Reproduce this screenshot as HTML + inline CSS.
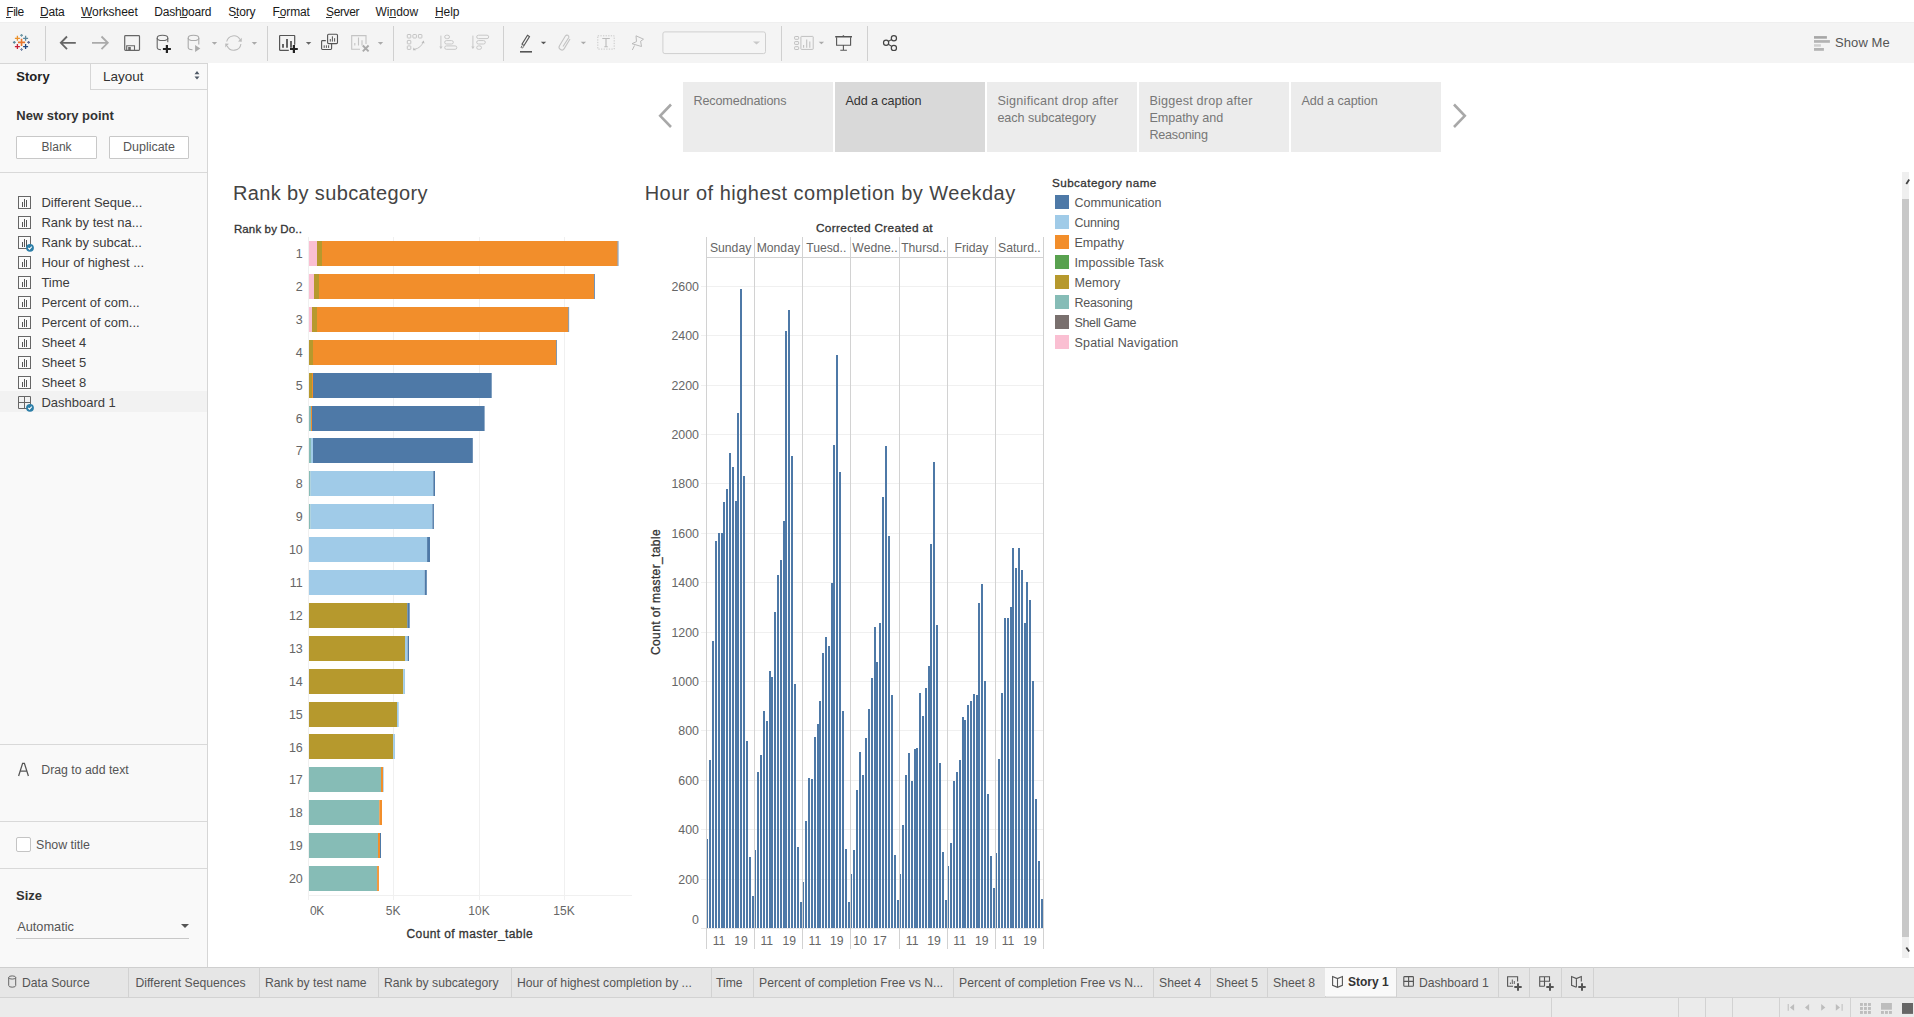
<!DOCTYPE html>
<html><head><meta charset="utf-8"><style>
html,body{margin:0;padding:0;}
body{width:1914px;height:1017px;overflow:hidden;position:relative;background:#fff;font-family:"Liberation Sans",sans-serif;}
.t{position:absolute;white-space:pre;line-height:1;font-family:"Liberation Sans",sans-serif;}
.r{position:absolute;}
svg{position:absolute;overflow:visible;}
</style></head><body>
<div class=t style="left:6.30px;top:5.64px;font-size:12px;color:#1a1a1a;letter-spacing:-0.461px;">File</div>
<div class=t style="left:40.10px;top:5.64px;font-size:12px;color:#1a1a1a;letter-spacing:-0.240px;">Data</div>
<div class=t style="left:81.00px;top:5.64px;font-size:12px;color:#1a1a1a;letter-spacing:-0.049px;">Worksheet</div>
<div class=t style="left:154.20px;top:5.64px;font-size:12px;color:#1a1a1a;letter-spacing:-0.169px;">Dashboard</div>
<div class=t style="left:228.20px;top:5.64px;font-size:12px;color:#1a1a1a;letter-spacing:-0.183px;">Story</div>
<div class=t style="left:272.60px;top:5.64px;font-size:12px;color:#1a1a1a;letter-spacing:-0.153px;">Format</div>
<div class=t style="left:326.00px;top:5.64px;font-size:12px;color:#1a1a1a;letter-spacing:-0.374px;">Server</div>
<div class=t style="left:375.40px;top:5.64px;font-size:12px;color:#1a1a1a;letter-spacing:0.035px;">Window</div>
<div class=t style="left:435.00px;top:5.64px;font-size:12px;color:#1a1a1a;letter-spacing:-0.072px;">Help</div>
<div class=r style="left:6px;top:17px;width:4.7px;height:1px;background:#333;"></div>
<div class=r style="left:40.1px;top:17px;width:7.8px;height:1px;background:#333;"></div>
<div class=r style="left:80.9px;top:17px;width:11px;height:1px;background:#333;"></div>
<div class=r style="left:180.2px;top:17px;width:6.6px;height:1px;background:#333;"></div>
<div class=r style="left:233.7px;top:17px;width:4.6px;height:1px;background:#333;"></div>
<div class=r style="left:278.4px;top:17px;width:6.5px;height:1px;background:#333;"></div>
<div class=r style="left:326.2px;top:17px;width:5.7px;height:1px;background:#333;"></div>
<div class=r style="left:388.9px;top:17px;width:6.8px;height:1px;background:#333;"></div>
<div class=r style="left:435.1px;top:17px;width:7.6px;height:1px;background:#333;"></div>
<div class=r style="left:0px;top:22px;width:1914px;height:41px;background:#f4f4f4;"></div>
<div class=r style="left:0px;top:22px;width:1914px;height:1px;background:#efefef;"></div>
<div class=r style="left:45px;top:26px;width:1px;height:35px;background:#d0d0d0;"></div>
<div class=r style="left:267px;top:26px;width:1px;height:35px;background:#d0d0d0;"></div>
<div class=r style="left:393px;top:26px;width:1px;height:35px;background:#d0d0d0;"></div>
<div class=r style="left:503px;top:26px;width:1px;height:35px;background:#d0d0d0;"></div>
<div class=r style="left:781px;top:26px;width:1px;height:35px;background:#d0d0d0;"></div>
<div class=r style="left:867px;top:26px;width:1px;height:35px;background:#d0d0d0;"></div>
<svg style="left:0;top:0" width="1914" height="70"><path d="M17.95 42.4 H25.150000000000002 M21.55 38.8 V46.0" stroke="#e8762d" stroke-width="1.6"/><path d="M14.899999999999999 38.3 H19.9 M17.4 35.8 V40.8" stroke="#eb912b" stroke-width="1.3"/><path d="M23.1 38.3 H28.1 M25.6 35.8 V40.8" stroke="#5b879b" stroke-width="1.3"/><path d="M14.899999999999999 46.6 H19.9 M17.4 44.1 V49.1" stroke="#c72037" stroke-width="1.3"/><path d="M23.1 46.6 H28.1 M25.6 44.1 V49.1" stroke="#1f457e" stroke-width="1.3"/><path d="M20.150000000000002 35.4 H22.95 M21.55 34.0 V36.8" stroke="#7199a6" stroke-width="1.1"/><path d="M12.9 42.4 H15.700000000000001 M14.3 41.0 V43.8" stroke="#59879b" stroke-width="1.1"/><path d="M27.200000000000003 42.4 H30.0 M28.6 41.0 V43.8" stroke="#5c6692" stroke-width="1.1"/><path d="M20.150000000000002 49.5 H22.95 M21.55 48.1 V50.9" stroke="#7c8aa9" stroke-width="1.1"/><path d="M75.8 42.8 H61 M67 36.5 L60.8 42.8 L67 49.2" fill="none" stroke="#666" stroke-width="1.8"/><path d="M92 42.8 H107.8 M101.5 36.5 L107.8 42.8 L101.5 49.2" fill="none" stroke="#aaa" stroke-width="1.8"/><rect x="124.7" y="35.7" width="14.8" height="14.6" rx="0.8" fill="none" stroke="#666" stroke-width="1.2"/><path d="M126.7 50.3 V45.7 H134.5 V50.3" fill="none" stroke="#666" stroke-width="1.1"/><rect x="128.2" y="47" width="2.6" height="3.3" fill="#666"/><ellipse cx="162.5" cy="37.9" rx="5.3" ry="2.6" fill="none" stroke="#666" stroke-width="1.1"/><path d="M157.2 37.9 V47.5 Q157.2 49.5 161 49.8 M167.8 37.9 V42.3" fill="none" stroke="#666" stroke-width="1.1"/><path d="M162.9 49 H170.9 M166.9 45 V53" stroke="#222" stroke-width="2.2"/><ellipse cx="193.5" cy="37.9" rx="5.3" ry="2.6" fill="none" stroke="#aaa" stroke-width="1.1"/><path d="M188.2 37.9 V47.5 Q188.2 49.5 192.5 49.8 M198.8 37.9 V44.5" fill="none" stroke="#aaa" stroke-width="1.1"/><path d="M195.1 45 L200.3 48.4 L195.1 51.9 Z" fill="#aaa"/><path d="M211.8 42.1 H217.2 L214.5 44.699999999999996 Z" fill="#aaa"/><path d="M226.7 41.5 A7.2 7.2 0 0 1 240 39.5 M240.9 44 A7.2 7.2 0 0 1 227.2 46" fill="none" stroke="#bbb" stroke-width="1.1"/><path d="M238 41.5 L241.8 41.8 L241.7 37.8 Z M228.9 43.8 L225.2 43.6 L225.4 47.6 Z" fill="#bbb"/><path d="M251.70000000000002 42.1 H257.1 L254.4 44.699999999999996 Z" fill="#aaa"/><path d="M288.8 50.3 H280 Q279.6 50.3 279.6 49.8 V36 Q279.6 35.5 280.1 35.5 H294.3 Q294.7 35.5 294.7 36 V44.8" fill="none" stroke="#555" stroke-width="1.2"/><path d="M283 47.7 V44 M287 47.7 V39.1 M291 47.7 V41" stroke="#555" stroke-width="1.8"/><path d="M290.0 49 H297.79999999999995 M293.9 45.1 V52.9" stroke="#222" stroke-width="2.2"/><path d="M305.90000000000003 42.1 H311.3 L308.6 44.699999999999996 Z" fill="#666"/><rect x="327.6" y="34.3" width="9.9" height="9.3" rx="1" fill="#f3f3f3" stroke="#555" stroke-width="1.1"/><path d="M325.8 40.6 H322.5 Q321.6 40.6 321.6 41.5 V48.6 Q321.6 49.5 322.5 49.5 H330.7 Q331.6 49.5 331.6 48.6 V43.6" fill="none" stroke="#555" stroke-width="1.1"/><path d="M330.3 41.6 V39 M332.4 41.6 V36.3 M334.6 41.6 V38.2" stroke="#555" stroke-width="1"/><path d="M324.2 47.9 V45.3 M326.4 47.9 V45.3 M328.6 47.9 V45.3" stroke="#555" stroke-width="1"/><path d="M360 49.3 H351.7 V35.6 H366 V44" fill="none" stroke="#c4c4c4" stroke-width="1.1"/><path d="M354.8 45.5 V43 M358.5 45.5 V37.5 M362 45.5 V40.3" stroke="#c4c4c4" stroke-width="1.1"/><path d="M362.8 45.5 L368.6 51.3 M368.6 45.5 L362.8 51.3" stroke="#aaa" stroke-width="1.9"/><path d="M377.8 42.1 H383.2 L380.5 44.699999999999996 Z" fill="#aaa"/><rect x="407.3" y="34.5" width="3.5" height="3.5" rx="0.6" fill="none" stroke="#c4c4c4" stroke-width="1"/><rect x="412.9" y="34.5" width="3.5" height="3.5" rx="0.6" fill="none" stroke="#c4c4c4" stroke-width="1"/><rect x="418.4" y="34.5" width="3.5" height="3.5" rx="0.6" fill="none" stroke="#c4c4c4" stroke-width="1"/><rect x="407.3" y="40.4" width="3.5" height="3.5" rx="0.6" fill="none" stroke="#c4c4c4" stroke-width="1"/><rect x="407.3" y="45.9" width="3.5" height="3.5" rx="0.6" fill="none" stroke="#c4c4c4" stroke-width="1"/><path d="M414.5 49.3 Q421 48 423.1 42" fill="none" stroke="#c4c4c4" stroke-width="1"/><path d="M421.5 42.5 L423.8 40.6 L424.5 43.6 Z M413.5 47.6 L413 50.3 L416 50.3 Z" fill="#bbb"/><path d="M440.9 35.6 V48.2" stroke="#c8c8c8" stroke-width="1"/><path d="M439.2 46.5 L440.9 49 L442.6 46.5 Z" fill="#c8c8c8"/><rect x="444.7" y="35.2" width="4.8" height="3.4" rx="1.7" fill="none" stroke="#c8c8c8" stroke-width="1"/><rect x="444.7" y="40.6" width="8.6" height="3.4" rx="1.7" fill="none" stroke="#c8c8c8" stroke-width="1"/><rect x="444.7" y="45.9" width="12.1" height="3.4" rx="1.7" fill="none" stroke="#c8c8c8" stroke-width="1"/><path d="M472.9 35.6 V48.2" stroke="#c8c8c8" stroke-width="1"/><path d="M471.2 46.5 L472.9 49 L474.6 46.5 Z" fill="#c8c8c8"/><rect x="476.7" y="35.2" width="12" height="3.4" rx="1.7" fill="none" stroke="#c8c8c8" stroke-width="1"/><rect x="476.7" y="40.6" width="8.6" height="3.4" rx="1.7" fill="none" stroke="#c8c8c8" stroke-width="1"/><rect x="476.7" y="45.9" width="4.8" height="3.4" rx="1.7" fill="none" stroke="#c8c8c8" stroke-width="1"/><path d="M527.5 35.3 L529.5 36.6 L524 45.5 L522 44.2 Z" fill="none" stroke="#555" stroke-width="1.1"/><path d="M522 45.6 L521 48 M523.7 46.3 L522.3 48.4" stroke="#555" stroke-width="0.9"/><rect x="520" y="51" width="12" height="1.6" fill="#555"/><path d="M540.8 41.7 H546.2 L543.5 44.3 Z" fill="#555"/><path d="M563 46.5 L568.8 37.5 A1.9 1.9 0 0 0 565.5 35.8 L559.5 45.8 A2.7 2.7 0 0 0 564.2 48.6 L570 39" fill="none" stroke="#c4c4c4" stroke-width="1.1"/><path d="M580.6999999999999 41.7 H586.1 L583.4 44.3 Z" fill="#aaa"/><rect x="597.8" y="35.8" width="16.4" height="13.3" fill="none" stroke="#c8c8c8" stroke-width="1" stroke-dasharray="1.3 1.3"/><path d="M602.3 38.5 H609.8 M606 38.5 V46.8 M604.3 46.8 H607.8" fill="none" stroke="#bbb" stroke-width="1.1"/><path d="M636 35.8 L643.5 39.2 L640.6 41.2 L641.5 46.5 L632 43.7 L636.5 41.6 Z M634.5 45.5 L632.3 50" fill="none" stroke="#bbb" stroke-width="1"/><rect x="662.9" y="31.9" width="102.6" height="21.7" rx="2" fill="#f5f5f5" stroke="#cfcfcf" stroke-width="1"/><path d="M753.0 41.5 H760.0 L756.5 44.5 Z" fill="#c8c8c8"/><rect x="794.6" y="36.5" width="4" height="2.8" rx="0.6" fill="none" stroke="#c0c0c0" stroke-width="1"/><rect x="794.6" y="41.6" width="4" height="2.8" rx="0.6" fill="none" stroke="#c0c0c0" stroke-width="1"/><rect x="794.6" y="46.7" width="4" height="2.8" rx="0.6" fill="none" stroke="#c0c0c0" stroke-width="1"/><rect x="800.9" y="36.4" width="12.3" height="13" rx="0.6" fill="none" stroke="#c0c0c0" stroke-width="1"/><path d="M803.6 47.7 V45 M806.7 47.7 V39.5 M809.8 47.7 V41.5" stroke="#c0c0c0" stroke-width="1.1"/><path d="M818.6999999999999 41.7 H824.1 L821.4 44.3 Z" fill="#aaa"/><path d="M835.2 36.7 H852 M843.4 35.2 V36.7" stroke="#555" stroke-width="1.4"/><path d="M836.6 37.3 V45.3 H850.6 V37.3 M843.4 45.3 V50.3 M840.3 50.3 H846.9" fill="none" stroke="#555" stroke-width="1.1"/><path d="M886.1 42.8 L893.9 38.1 M886.1 42.8 L893.9 47.9" stroke="#444" stroke-width="1.1"/><circle cx="893.9" cy="38.2" r="2.6" fill="#f3f3f3" stroke="#444" stroke-width="1.2"/><circle cx="886.1" cy="42.8" r="2.6" fill="#f3f3f3" stroke="#444" stroke-width="1.2"/><circle cx="893.9" cy="47.9" r="2.6" fill="#f3f3f3" stroke="#444" stroke-width="1.2"/><rect x="1814" y="36.1" width="12.9" height="2.6" fill="#a6a6a6"/><rect x="1814" y="40.1" width="15.9" height="2.7" fill="#b3b3b3"/><rect x="1814" y="44.2" width="6.9" height="2.5" fill="#cfcfcf"/><rect x="1814" y="48" width="9.9" height="2.8" fill="#b3b3b3"/></svg>
<div class=t style="left:1835.00px;top:36.20px;font-size:13px;color:#555;letter-spacing:0.085px;">Show Me</div>
<div class=r style="left:0px;top:63px;width:207px;height:904px;background:#f9f9f9;"></div>
<div class=r style="left:0px;top:63px;width:208px;height:1px;background:#d6d6d6;"></div>
<div class=r style="left:207px;top:63px;width:1px;height:904px;background:#d6d6d6;"></div>
<div class=r style="left:90px;top:64px;width:117px;height:26px;background:#f9f9f9;border-left:1px solid #d6d6d6;border-bottom:1px solid #d6d6d6;box-sizing:border-box;"></div>
<div class=t style="left:16.30px;top:69.60px;font-size:13px;color:#222;font-weight:bold;letter-spacing:0.033px;">Story</div>
<div class=t style="left:103.00px;top:70.07px;font-size:13.5px;color:#333;letter-spacing:-0.008px;">Layout</div>
<svg style="left:192.5px;top:69px;" width="8" height="12" viewBox="0 0 8 12"><path d="M1.5 5.2 L4 2 L6.5 5.2 Z M1.5 7.4 L4 10.6 L6.5 7.4 Z" fill="#4f5966"/></svg>
<div class=t style="left:16.30px;top:109.40px;font-size:13px;color:#333;font-weight:bold;letter-spacing:0.006px;">New story point</div>
<div class=r style="left:16px;top:136px;width:81px;height:23px;background:#fff;border:1px solid #c8c8c8;box-sizing:border-box;border-radius:1px;"></div>
<div class=r style="left:109px;top:136px;width:80px;height:23px;background:#fff;border:1px solid #c8c8c8;box-sizing:border-box;border-radius:1px;"></div>
<div class=t style="left:41.40px;top:140.94px;font-size:12px;color:#555;letter-spacing:0.054px;">Blank</div>
<div class=t style="left:123.00px;top:140.52px;font-size:12.5px;color:#555;letter-spacing:-0.014px;">Duplicate</div>
<div class=r style="left:0px;top:172px;width:207px;height:1px;background:#d9d9d9;"></div>
<div class=r style="left:0px;top:391px;width:207px;height:21px;background:#f2f2f2;"></div>
<div class=t style="left:41.40px;top:196.30px;font-size:13px;color:#3c3c3c;">Different Seque...</div>
<svg style="left:17px;top:195px;" width="18" height="18" viewBox="0 0 18 18"><rect x="1.5" y="1.5" width="12" height="12" fill="none" stroke="#666" stroke-width="1"/><rect x="5" y="7" width="1" height="5" fill="#555"/><rect x="7" y="4" width="1" height="8" fill="#555"/><rect x="9" y="5" width="1" height="7" fill="#555"/></svg>
<div class=t style="left:41.40px;top:216.30px;font-size:13px;color:#3c3c3c;">Rank by test na...</div>
<svg style="left:17px;top:215px;" width="18" height="18" viewBox="0 0 18 18"><rect x="1.5" y="1.5" width="12" height="12" fill="none" stroke="#666" stroke-width="1"/><rect x="5" y="7" width="1" height="5" fill="#555"/><rect x="7" y="4" width="1" height="8" fill="#555"/><rect x="9" y="5" width="1" height="7" fill="#555"/></svg>
<div class=t style="left:41.40px;top:236.30px;font-size:13px;color:#3c3c3c;">Rank by subcat...</div>
<svg style="left:17px;top:235px;" width="18" height="18" viewBox="0 0 18 18"><rect x="1.5" y="1.5" width="12" height="12" fill="none" stroke="#666" stroke-width="1"/><rect x="5" y="7" width="1" height="5" fill="#555"/><rect x="7" y="4" width="1" height="8" fill="#555"/><rect x="9" y="5" width="1" height="7" fill="#555"/><circle cx="13" cy="12.8" r="3.9" fill="#2d7fa8"/><path d="M11.2 12.9 L12.5 14.1 L14.8 11.6" stroke="#fff" stroke-width="1.1" fill="none"/></svg>
<div class=t style="left:41.40px;top:256.30px;font-size:13px;color:#3c3c3c;">Hour of highest ...</div>
<svg style="left:17px;top:255px;" width="18" height="18" viewBox="0 0 18 18"><rect x="1.5" y="1.5" width="12" height="12" fill="none" stroke="#666" stroke-width="1"/><rect x="5" y="7" width="1" height="5" fill="#555"/><rect x="7" y="4" width="1" height="8" fill="#555"/><rect x="9" y="5" width="1" height="7" fill="#555"/></svg>
<div class=t style="left:41.40px;top:276.30px;font-size:13px;color:#3c3c3c;">Time</div>
<svg style="left:17px;top:275px;" width="18" height="18" viewBox="0 0 18 18"><rect x="1.5" y="1.5" width="12" height="12" fill="none" stroke="#666" stroke-width="1"/><rect x="5" y="7" width="1" height="5" fill="#555"/><rect x="7" y="4" width="1" height="8" fill="#555"/><rect x="9" y="5" width="1" height="7" fill="#555"/></svg>
<div class=t style="left:41.40px;top:296.30px;font-size:13px;color:#3c3c3c;">Percent of com...</div>
<svg style="left:17px;top:295px;" width="18" height="18" viewBox="0 0 18 18"><rect x="1.5" y="1.5" width="12" height="12" fill="none" stroke="#666" stroke-width="1"/><rect x="5" y="7" width="1" height="5" fill="#555"/><rect x="7" y="4" width="1" height="8" fill="#555"/><rect x="9" y="5" width="1" height="7" fill="#555"/></svg>
<div class=t style="left:41.40px;top:316.30px;font-size:13px;color:#3c3c3c;">Percent of com...</div>
<svg style="left:17px;top:315px;" width="18" height="18" viewBox="0 0 18 18"><rect x="1.5" y="1.5" width="12" height="12" fill="none" stroke="#666" stroke-width="1"/><rect x="5" y="7" width="1" height="5" fill="#555"/><rect x="7" y="4" width="1" height="8" fill="#555"/><rect x="9" y="5" width="1" height="7" fill="#555"/></svg>
<div class=t style="left:41.40px;top:336.30px;font-size:13px;color:#3c3c3c;">Sheet 4</div>
<svg style="left:17px;top:335px;" width="18" height="18" viewBox="0 0 18 18"><rect x="1.5" y="1.5" width="12" height="12" fill="none" stroke="#666" stroke-width="1"/><rect x="5" y="7" width="1" height="5" fill="#555"/><rect x="7" y="4" width="1" height="8" fill="#555"/><rect x="9" y="5" width="1" height="7" fill="#555"/></svg>
<div class=t style="left:41.40px;top:356.30px;font-size:13px;color:#3c3c3c;">Sheet 5</div>
<svg style="left:17px;top:355px;" width="18" height="18" viewBox="0 0 18 18"><rect x="1.5" y="1.5" width="12" height="12" fill="none" stroke="#666" stroke-width="1"/><rect x="5" y="7" width="1" height="5" fill="#555"/><rect x="7" y="4" width="1" height="8" fill="#555"/><rect x="9" y="5" width="1" height="7" fill="#555"/></svg>
<div class=t style="left:41.40px;top:376.30px;font-size:13px;color:#3c3c3c;">Sheet 8</div>
<svg style="left:17px;top:375px;" width="18" height="18" viewBox="0 0 18 18"><rect x="1.5" y="1.5" width="12" height="12" fill="none" stroke="#666" stroke-width="1"/><rect x="5" y="7" width="1" height="5" fill="#555"/><rect x="7" y="4" width="1" height="8" fill="#555"/><rect x="9" y="5" width="1" height="7" fill="#555"/></svg>
<div class=t style="left:41.40px;top:396.30px;font-size:13px;color:#3c3c3c;">Dashboard 1</div>
<svg style="left:17px;top:395px;" width="18" height="18" viewBox="0 0 18 18"><path d="M1.5 1.5 H13.5 V13.5 H1.5 Z M7.5 1.5 V13.5 M1.5 7.5 H13.5" fill="none" stroke="#666" stroke-width="1"/><circle cx="13" cy="12.8" r="3.9" fill="#2d7fa8"/><path d="M11.2 12.9 L12.5 14.1 L14.8 11.6" stroke="#fff" stroke-width="1.1" fill="none"/></svg>
<div class=r style="left:0px;top:744px;width:207px;height:1px;background:#d9d9d9;"></div>
<svg style="left:17px;top:762px;" width="14" height="16" viewBox="0 0 14 16"><path d="M1.6 14 L5.6 1.4 H7.4 L11.4 14 M3.1 9.2 H9.9" fill="none" stroke="#555" stroke-width="1.25"/></svg>
<div class=t style="left:41.30px;top:763.89px;font-size:12.3px;color:#555;letter-spacing:-0.006px;">Drag to add text</div>
<div class=r style="left:0px;top:821px;width:207px;height:1px;background:#d9d9d9;"></div>
<div class=r style="left:16px;top:837px;width:15px;height:15px;background:#fff;border:1px solid #c4c4c4;box-sizing:border-box;border-radius:2px;"></div>
<div class=t style="left:36.10px;top:838.90px;font-size:12.4px;color:#555;letter-spacing:0.017px;">Show title</div>
<div class=r style="left:0px;top:868px;width:207px;height:1px;background:#d9d9d9;"></div>
<div class=t style="left:16.00px;top:889.40px;font-size:13px;color:#333;font-weight:bold;">Size</div>
<div class=t style="left:17.20px;top:920.51px;font-size:12.75px;color:#555;">Automatic</div>
<svg style="left:181px;top:924.0px;" width="8" height="4" viewBox="0 0 8 4"><path d="M0 0 L8 0 L4 4 Z" fill="#555"/></svg>
<div class=r style="left:16px;top:938px;width:173px;height:1px;background:#c8c8c8;"></div>
<svg style="left:657px;top:103px;" width="16" height="26" viewBox="0 0 16 26"><path d="M14 1.5 L3.2 12.8 L14 24" fill="none" stroke="#a8a8a8" stroke-width="2.6"/></svg>
<svg style="left:1452px;top:103px;" width="16" height="26" viewBox="0 0 16 26"><path d="M2 1.5 L12.8 12.8 L2 24" fill="none" stroke="#a8a8a8" stroke-width="2.6"/></svg>
<div class=r style="left:683px;top:82px;width:150px;height:70px;background:#ececec;"></div>
<div class=t style="left:693.40px;top:94.63px;font-size:12.6px;color:#777;letter-spacing:-0.108px;">Recomednations</div>
<div class=r style="left:835px;top:82px;width:150px;height:70px;background:#d9d9d9;"></div>
<div class=t style="left:845.40px;top:94.63px;font-size:12.6px;color:#333;letter-spacing:-0.079px;">Add a caption</div>
<div class=r style="left:987px;top:82px;width:150px;height:70px;background:#ececec;"></div>
<div class=t style="left:997.40px;top:94.63px;font-size:12.6px;color:#777;letter-spacing:0.254px;">Significant drop after</div>
<div class=t style="left:997.40px;top:111.63px;font-size:12.6px;color:#777;letter-spacing:-0.045px;">each subcategory</div>
<div class=r style="left:1139px;top:82px;width:150px;height:70px;background:#ececec;"></div>
<div class=t style="left:1149.40px;top:94.63px;font-size:12.6px;color:#777;letter-spacing:0.210px;">Biggest drop after</div>
<div class=t style="left:1149.40px;top:111.63px;font-size:12.6px;color:#777;letter-spacing:-0.038px;">Empathy and</div>
<div class=t style="left:1149.40px;top:128.63px;font-size:12.6px;color:#777;letter-spacing:-0.213px;">Reasoning</div>
<div class=r style="left:1291px;top:82px;width:150px;height:70px;background:#ececec;"></div>
<div class=t style="left:1301.40px;top:94.63px;font-size:12.6px;color:#777;letter-spacing:-0.056px;">Add a caption</div>
<div class=r style="left:1902px;top:172px;width:7px;height:27px;background:#efefef;"></div>
<div class=r style="left:1902px;top:199px;width:7px;height:738px;background:#c8c8c8;"></div>
<div class=r style="left:1902px;top:937px;width:7px;height:21px;background:#efefef;"></div>
<svg style="left:1900px;top:170px" width="14" height="800" viewBox="1900 170 14 800"><path d="M1906.3 184 L1909.2 179.6 M1906.3 947.5 L1909.2 951.6" stroke="#444" stroke-width="1.8"/></svg>
<div class=r style="left:0px;top:967px;width:1914px;height:30px;background:#e6e6e6;"></div>
<div class=r style="left:0px;top:997px;width:1914px;height:20px;background:#ebebeb;"></div>
<div class=r style="left:0px;top:967px;width:1914px;height:1px;background:#cfcfcf;"></div>
<div class=r style="left:0px;top:997px;width:1914px;height:1px;background:#d2d2d2;"></div>
<div class=r style="left:128px;top:967px;width:1px;height:30px;background:#d2d2d2;"></div>
<div class=r style="left:259px;top:967px;width:1px;height:30px;background:#d2d2d2;"></div>
<div class=r style="left:378px;top:967px;width:1px;height:30px;background:#d2d2d2;"></div>
<div class=r style="left:511px;top:967px;width:1px;height:30px;background:#d2d2d2;"></div>
<div class=r style="left:711px;top:967px;width:1px;height:30px;background:#d2d2d2;"></div>
<div class=r style="left:753px;top:967px;width:1px;height:30px;background:#d2d2d2;"></div>
<div class=r style="left:953px;top:967px;width:1px;height:30px;background:#d2d2d2;"></div>
<div class=r style="left:1153px;top:967px;width:1px;height:30px;background:#d2d2d2;"></div>
<div class=r style="left:1210px;top:967px;width:1px;height:30px;background:#d2d2d2;"></div>
<div class=r style="left:1267px;top:967px;width:1px;height:30px;background:#d2d2d2;"></div>
<div class=r style="left:1325px;top:967px;width:1px;height:30px;background:#d2d2d2;"></div>
<div class=r style="left:1325px;top:968px;width:71px;height:28px;background:#f9f9f9;"></div>
<div class=r style="left:1396px;top:967px;width:1px;height:30px;background:#d2d2d2;"></div>
<div class=r style="left:1498px;top:967px;width:1px;height:30px;background:#d2d2d2;"></div>
<div class=r style="left:1529px;top:967px;width:1px;height:30px;background:#d2d2d2;"></div>
<div class=r style="left:1561px;top:967px;width:1px;height:30px;background:#d2d2d2;"></div>
<div class=r style="left:1593px;top:967px;width:1px;height:30px;background:#d2d2d2;"></div>
<div class=t style="left:22.00px;top:977.17px;font-size:12.2px;color:#555;">Data Source</div>
<div class=t style="left:135.40px;top:977.17px;font-size:12.2px;color:#555;">Different Sequences</div>
<div class=t style="left:265.00px;top:977.17px;font-size:12.2px;color:#555;">Rank by test name</div>
<div class=t style="left:384.00px;top:977.17px;font-size:12.2px;color:#555;">Rank by subcategory</div>
<div class=t style="left:517.00px;top:977.17px;font-size:12.2px;color:#555;">Hour of highest completion by ...</div>
<div class=t style="left:716.00px;top:977.17px;font-size:12.2px;color:#555;">Time</div>
<div class=t style="left:759.00px;top:977.17px;font-size:12.2px;color:#555;">Percent of completion Free vs N...</div>
<div class=t style="left:959.00px;top:977.17px;font-size:12.2px;color:#555;">Percent of completion Free vs N...</div>
<div class=t style="left:1159.00px;top:977.17px;font-size:12.2px;color:#555;">Sheet 4</div>
<div class=t style="left:1216.00px;top:977.17px;font-size:12.2px;color:#555;">Sheet 5</div>
<div class=t style="left:1273.00px;top:977.17px;font-size:12.2px;color:#555;">Sheet 8</div>
<div class=t style="left:1418.90px;top:977.17px;font-size:12.2px;color:#555;">Dashboard 1</div>
<div class=t style="left:1348.00px;top:976.34px;font-size:12px;color:#333;font-weight:bold;">Story 1</div>
<svg style="left:0;top:960" width="1914" height="57" viewBox="0 960 1914 57"><ellipse cx="12.2" cy="977.5" rx="3.5" ry="1.6" fill="none" stroke="#666" stroke-width="1"/><path d="M8.7 977.5 V985.5 Q8.7 987.2 12.2 987.2 Q15.7 987.2 15.7 985.5 V977.5" fill="none" stroke="#666" stroke-width="1"/><path d="M1332.6 976.6 L1337.5 978.6 L1342.4 976.6 V985.3 L1337.5 987.3 L1332.6 985.3 Z M1337.5 978.6 V987.3" fill="none" stroke="#555" stroke-width="1.1"/><rect x="1403.8" y="976.6" width="9.6" height="9.6" rx="0.8" fill="none" stroke="#555" stroke-width="1.1"/><path d="M1408.6 976.6 V986.2 M1403.8 981.4 H1413.4" stroke="#555" stroke-width="1.1"/><path d="M1513 986.2 H1507.6 V976.7 H1517.6 V981.5" fill="none" stroke="#555" stroke-width="1.1"/><path d="M1510.4 984 V982.5 M1512.3 984 V979.5 M1514.3 984 V981" stroke="#555" stroke-width="0.9"/><path d="M1514.3 987 H1521.7 M1518 983.3 V990.7" stroke="#555" stroke-width="2"/><path d="M1544.5 986.2 H1539.7 V976.7 H1549.5 V981.3 H1539.7 M1544.5 976.7 V986.2" fill="none" stroke="#555" stroke-width="1.1"/><path d="M1546.3 987 H1553.7 M1550 983.3 V990.7" stroke="#555" stroke-width="2"/><path d="M1576.4 987.2 L1571.6 985.3 V976.6 L1576.4 978.6 L1581.3 976.6 V981.6 M1576.4 978.6 V987.2" fill="none" stroke="#555" stroke-width="1.1"/><path d="M1578.3 987 H1585.7 M1582 983.3 V990.7" stroke="#555" stroke-width="2"/></svg>
<div class=r style="left:1551px;top:998px;width:1px;height:19px;background:#d2d2d2;"></div>
<div class=r style="left:1678px;top:998px;width:1px;height:19px;background:#d2d2d2;"></div>
<div class=r style="left:1705px;top:998px;width:1px;height:19px;background:#d2d2d2;"></div>
<div class=r style="left:1732px;top:998px;width:1px;height:19px;background:#d2d2d2;"></div>
<div class=r style="left:1779px;top:998px;width:1px;height:19px;background:#d2d2d2;"></div>
<div class=r style="left:1850px;top:998px;width:1px;height:19px;background:#d2d2d2;"></div>
<svg style="left:0;top:995" width="1914" height="22" viewBox="0 995 1914 22"><rect x="1787.7" y="1004" width="1" height="6.8" fill="#bdbdbd"/><path d="M1794.1 1004 L1789.9 1007.4 L1794.1 1010.8 Z" fill="#bdbdbd"/><path d="M1809.1 1004 L1805 1007.4 L1809.1 1010.8 Z" fill="#bdbdbd"/><path d="M1821.2 1004 L1825.3 1007.4 L1821.2 1010.8 Z" fill="#bdbdbd"/><path d="M1835.8 1004 L1840 1007.4 L1835.8 1010.8 Z" fill="#bdbdbd"/><rect x="1841.6" y="1004" width="1" height="6.8" fill="#bdbdbd"/><rect x="1860" y="1003" width="2.9" height="2.9" fill="#bdbdbd"/><rect x="1860" y="1007" width="2.9" height="2.9" fill="#bdbdbd"/><rect x="1860" y="1011" width="2.9" height="2.9" fill="#bdbdbd"/><rect x="1864" y="1003" width="2.9" height="2.9" fill="#bdbdbd"/><rect x="1864" y="1007" width="2.9" height="2.9" fill="#bdbdbd"/><rect x="1864" y="1011" width="2.9" height="2.9" fill="#bdbdbd"/><rect x="1868" y="1003" width="2.9" height="2.9" fill="#bdbdbd"/><rect x="1868" y="1007" width="2.9" height="2.9" fill="#bdbdbd"/><rect x="1868" y="1011" width="2.9" height="2.9" fill="#bdbdbd"/><rect x="1881" y="1003" width="10.9" height="6.7" fill="#bdbdbd"/><rect x="1881" y="1011" width="2.9" height="2.9" fill="#bdbdbd"/><rect x="1885" y="1011" width="2.9" height="2.9" fill="#bdbdbd"/><rect x="1889" y="1011" width="2.9" height="2.9" fill="#bdbdbd"/><rect x="1902" y="1003" width="11" height="10.9" fill="#666"/></svg>
<div class=t style="left:232.90px;top:183.17px;font-size:20px;color:#444;letter-spacing:0.374px;">Rank by subcategory</div>
<div class=t style="left:233.90px;top:223.67px;font-size:11.5px;color:#333;-webkit-text-stroke:0.3px #333;letter-spacing:0.135px;">Rank by Do..</div>
<svg style="left:0;top:0" width="1914" height="1017"><rect x="308" y="237" width="1" height="663" fill="#f0f0f0"/><rect x="393" y="237" width="1" height="663" fill="#f0f0f0"/><rect x="479" y="237" width="1" height="663" fill="#f0f0f0"/><rect x="564" y="237" width="1" height="663" fill="#f0f0f0"/><rect x="308" y="895" width="324" height="1" fill="#f0f0f0"/><rect x="309.00" y="241" width="8.00" height="25" fill="#fabfd2"/><rect x="317.00" y="241" width="5.00" height="25" fill="#b6992d"/><rect x="322.00" y="241" width="295.60" height="25" fill="#f28e2b"/><rect x="617.60" y="241" width="0.80" height="25" fill="#4e79a7"/><rect x="309.00" y="274" width="5.00" height="25" fill="#fabfd2"/><rect x="314.00" y="274" width="5.00" height="25" fill="#b6992d"/><rect x="319.00" y="274" width="275.00" height="25" fill="#f28e2b"/><rect x="594.00" y="274" width="0.80" height="25" fill="#4e79a7"/><rect x="309.00" y="307" width="3.00" height="25" fill="#fabfd2"/><rect x="312.00" y="307" width="5.00" height="25" fill="#b6992d"/><rect x="317.00" y="307" width="251.40" height="25" fill="#f28e2b"/><rect x="568.40" y="307" width="0.70" height="25" fill="#4e79a7"/><rect x="309.00" y="340" width="4.00" height="25" fill="#b6992d"/><rect x="313.00" y="340" width="243.30" height="25" fill="#f28e2b"/><rect x="556.30" y="340" width="0.70" height="25" fill="#4e79a7"/><rect x="309.00" y="373" width="3.00" height="25" fill="#b6992d"/><rect x="312.00" y="373" width="1.00" height="25" fill="#f28e2b"/><rect x="313.00" y="373" width="178.70" height="25" fill="#4e79a7"/><rect x="309.00" y="406" width="2.00" height="25" fill="#86bcb6"/><rect x="311.00" y="406" width="1.00" height="25" fill="#f28e2b"/><rect x="312.00" y="406" width="172.60" height="25" fill="#4e79a7"/><rect x="309.00" y="438" width="2.00" height="25" fill="#86bcb6"/><rect x="311.00" y="438" width="2.00" height="25" fill="#a0cbe8"/><rect x="313.00" y="438" width="159.80" height="25" fill="#4e79a7"/><rect x="309.00" y="471" width="1.50" height="25" fill="#86bcb6"/><rect x="310.50" y="471" width="122.80" height="25" fill="#a0cbe8"/><rect x="433.30" y="471" width="1.70" height="25" fill="#4e79a7"/><rect x="309.00" y="504" width="1.50" height="25" fill="#86bcb6"/><rect x="310.50" y="504" width="121.90" height="25" fill="#a0cbe8"/><rect x="432.40" y="504" width="1.50" height="25" fill="#4e79a7"/><rect x="309.00" y="537" width="118.10" height="25" fill="#a0cbe8"/><rect x="427.10" y="537" width="2.90" height="25" fill="#4e79a7"/><rect x="309.00" y="570" width="115.70" height="25" fill="#a0cbe8"/><rect x="424.70" y="570" width="2.10" height="25" fill="#4e79a7"/><rect x="309.00" y="603" width="98.30" height="25" fill="#b6992d"/><rect x="407.30" y="603" width="2.40" height="25" fill="#4e79a7"/><rect x="309.00" y="636" width="96.00" height="25" fill="#b6992d"/><rect x="405.00" y="636" width="2.60" height="25" fill="#a0cbe8"/><rect x="407.60" y="636" width="1.40" height="25" fill="#4e79a7"/><rect x="309.00" y="669" width="94.20" height="25" fill="#b6992d"/><rect x="403.20" y="669" width="1.80" height="25" fill="#a0cbe8"/><rect x="309.00" y="702" width="88.00" height="25" fill="#b6992d"/><rect x="397.00" y="702" width="1.70" height="25" fill="#a0cbe8"/><rect x="309.00" y="734" width="84.20" height="25" fill="#b6992d"/><rect x="393.20" y="734" width="1.80" height="25" fill="#a0cbe8"/><rect x="309.00" y="767" width="72.00" height="25" fill="#86bcb6"/><rect x="381.00" y="767" width="2.00" height="25" fill="#f28e2b"/><rect x="383.00" y="767" width="0.70" height="25" fill="#a0cbe8"/><rect x="309.00" y="800" width="70.30" height="25" fill="#86bcb6"/><rect x="379.30" y="800" width="2.70" height="25" fill="#f28e2b"/><rect x="309.00" y="833" width="69.00" height="25" fill="#86bcb6"/><rect x="378.00" y="833" width="2.00" height="25" fill="#f28e2b"/><rect x="380.00" y="833" width="1.00" height="25" fill="#4e79a7"/><rect x="309.00" y="866" width="68.10" height="25" fill="#86bcb6"/><rect x="377.10" y="866" width="1.80" height="25" fill="#f28e2b"/></svg>
<div class=t style="left:295.85px;top:248.02px;font-size:12.5px;color:#666;">1</div>
<div class=t style="left:295.85px;top:280.92px;font-size:12.5px;color:#666;">2</div>
<div class=t style="left:295.85px;top:313.82px;font-size:12.5px;color:#666;">3</div>
<div class=t style="left:295.85px;top:346.72px;font-size:12.5px;color:#666;">4</div>
<div class=t style="left:295.85px;top:379.62px;font-size:12.5px;color:#666;">5</div>
<div class=t style="left:295.85px;top:412.52px;font-size:12.5px;color:#666;">6</div>
<div class=t style="left:295.85px;top:445.42px;font-size:12.5px;color:#666;">7</div>
<div class=t style="left:295.85px;top:478.32px;font-size:12.5px;color:#666;">8</div>
<div class=t style="left:295.85px;top:511.22px;font-size:12.5px;color:#666;">9</div>
<div class=t style="left:288.89px;top:544.12px;font-size:12.5px;color:#666;">10</div>
<div class=t style="left:289.82px;top:577.02px;font-size:12.5px;color:#666;">11</div>
<div class=t style="left:288.89px;top:609.92px;font-size:12.5px;color:#666;">12</div>
<div class=t style="left:288.89px;top:642.82px;font-size:12.5px;color:#666;">13</div>
<div class=t style="left:288.89px;top:675.72px;font-size:12.5px;color:#666;">14</div>
<div class=t style="left:288.89px;top:708.62px;font-size:12.5px;color:#666;">15</div>
<div class=t style="left:288.89px;top:741.52px;font-size:12.5px;color:#666;">16</div>
<div class=t style="left:288.89px;top:774.42px;font-size:12.5px;color:#666;">17</div>
<div class=t style="left:288.89px;top:807.32px;font-size:12.5px;color:#666;">18</div>
<div class=t style="left:288.89px;top:840.22px;font-size:12.5px;color:#666;">19</div>
<div class=t style="left:288.89px;top:873.12px;font-size:12.5px;color:#666;">20</div>
<div class=t style="left:309.90px;top:904.84px;font-size:12px;color:#666;letter-spacing:-0.294px;">0K</div>
<div class=t style="left:385.86px;top:904.84px;font-size:12px;color:#666;">5K</div>
<div class=t style="left:468.32px;top:904.84px;font-size:12px;color:#666;">10K</div>
<div class=t style="left:553.32px;top:904.84px;font-size:12px;color:#666;">15K</div>
<div class=t style="left:406.50px;top:928.34px;font-size:12px;color:#333;-webkit-text-stroke:0.3px #333;letter-spacing:0.406px;">Count of master_table</div>
<div class=t style="left:644.70px;top:183.07px;font-size:20px;color:#444;letter-spacing:0.482px;">Hour of highest completion by Weekday</div>
<div class=t style="left:816.00px;top:222.51px;font-size:11.8px;color:#333;-webkit-text-stroke:0.3px #333;letter-spacing:0.341px;">Corrected Created at</div>
<svg style="left:0;top:0" width="1914" height="1017" shape-rendering="crispEdges"><rect x="701" y="879" width="343" height="1" fill="#f0f0f0"/><rect x="701" y="829" width="343" height="1" fill="#f0f0f0"/><rect x="701" y="780" width="343" height="1" fill="#f0f0f0"/><rect x="701" y="730" width="343" height="1" fill="#f0f0f0"/><rect x="701" y="681" width="343" height="1" fill="#f0f0f0"/><rect x="701" y="632" width="343" height="1" fill="#f0f0f0"/><rect x="701" y="582" width="343" height="1" fill="#f0f0f0"/><rect x="701" y="533" width="343" height="1" fill="#f0f0f0"/><rect x="701" y="483" width="343" height="1" fill="#f0f0f0"/><rect x="701" y="434" width="343" height="1" fill="#f0f0f0"/><rect x="701" y="385" width="343" height="1" fill="#f0f0f0"/><rect x="701" y="335" width="343" height="1" fill="#f0f0f0"/><rect x="701" y="286" width="343" height="1" fill="#f0f0f0"/><rect x="707" y="839" width="1" height="89" fill="#4e79a7"/><rect x="709" y="760" width="2" height="168" fill="#4e79a7"/><rect x="712" y="641" width="2" height="287" fill="#4e79a7"/><rect x="715" y="541" width="2" height="387" fill="#4e79a7"/><rect x="718" y="533" width="2" height="395" fill="#4e79a7"/><rect x="721" y="533" width="2" height="395" fill="#4e79a7"/><rect x="723" y="502" width="2" height="426" fill="#4e79a7"/><rect x="726" y="489" width="2" height="439" fill="#4e79a7"/><rect x="729" y="453" width="2" height="475" fill="#4e79a7"/><rect x="732" y="467" width="2" height="461" fill="#4e79a7"/><rect x="735" y="501" width="2" height="427" fill="#4e79a7"/><rect x="737" y="413" width="2" height="515" fill="#4e79a7"/><rect x="740" y="289" width="2" height="639" fill="#4e79a7"/><rect x="743" y="476" width="2" height="452" fill="#4e79a7"/><rect x="746" y="741" width="2" height="187" fill="#4e79a7"/><rect x="749" y="857" width="2" height="71" fill="#4e79a7"/><rect x="752" y="896" width="2" height="32" fill="#4e79a7"/><rect x="755" y="850" width="1" height="78" fill="#4e79a7"/><rect x="757" y="772" width="2" height="156" fill="#4e79a7"/><rect x="760" y="755" width="2" height="173" fill="#4e79a7"/><rect x="763" y="711" width="2" height="217" fill="#4e79a7"/><rect x="766" y="721" width="2" height="207" fill="#4e79a7"/><rect x="769" y="671" width="2" height="257" fill="#4e79a7"/><rect x="771" y="677" width="2" height="251" fill="#4e79a7"/><rect x="774" y="612" width="2" height="316" fill="#4e79a7"/><rect x="777" y="575" width="2" height="353" fill="#4e79a7"/><rect x="780" y="560" width="2" height="368" fill="#4e79a7"/><rect x="783" y="521" width="2" height="407" fill="#4e79a7"/><rect x="785" y="331" width="2" height="597" fill="#4e79a7"/><rect x="788" y="310" width="2" height="618" fill="#4e79a7"/><rect x="791" y="456" width="2" height="472" fill="#4e79a7"/><rect x="794" y="684" width="2" height="244" fill="#4e79a7"/><rect x="797" y="847" width="2" height="81" fill="#4e79a7"/><rect x="800" y="902" width="2" height="26" fill="#4e79a7"/><rect x="803" y="882" width="1" height="46" fill="#4e79a7"/><rect x="805" y="821" width="2" height="107" fill="#4e79a7"/><rect x="808" y="778" width="2" height="150" fill="#4e79a7"/><rect x="811" y="779" width="2" height="149" fill="#4e79a7"/><rect x="814" y="737" width="2" height="191" fill="#4e79a7"/><rect x="817" y="724" width="2" height="204" fill="#4e79a7"/><rect x="819" y="701" width="2" height="227" fill="#4e79a7"/><rect x="822" y="653" width="2" height="275" fill="#4e79a7"/><rect x="825" y="637" width="2" height="291" fill="#4e79a7"/><rect x="828" y="646" width="2" height="282" fill="#4e79a7"/><rect x="831" y="583" width="2" height="345" fill="#4e79a7"/><rect x="833" y="445" width="2" height="483" fill="#4e79a7"/><rect x="836" y="355" width="2" height="573" fill="#4e79a7"/><rect x="839" y="472" width="2" height="456" fill="#4e79a7"/><rect x="842" y="711" width="2" height="217" fill="#4e79a7"/><rect x="845" y="849" width="2" height="79" fill="#4e79a7"/><rect x="848" y="902" width="2" height="26" fill="#4e79a7"/><rect x="851" y="874" width="1" height="54" fill="#4e79a7"/><rect x="853" y="850" width="2" height="78" fill="#4e79a7"/><rect x="856" y="790" width="2" height="138" fill="#4e79a7"/><rect x="859" y="752" width="2" height="176" fill="#4e79a7"/><rect x="862" y="775" width="2" height="153" fill="#4e79a7"/><rect x="865" y="738" width="2" height="190" fill="#4e79a7"/><rect x="868" y="709" width="2" height="219" fill="#4e79a7"/><rect x="871" y="678" width="2" height="250" fill="#4e79a7"/><rect x="874" y="627" width="2" height="301" fill="#4e79a7"/><rect x="876" y="662" width="2" height="266" fill="#4e79a7"/><rect x="879" y="623" width="2" height="305" fill="#4e79a7"/><rect x="882" y="497" width="2" height="431" fill="#4e79a7"/><rect x="885" y="446" width="2" height="482" fill="#4e79a7"/><rect x="888" y="536" width="2" height="392" fill="#4e79a7"/><rect x="891" y="695" width="2" height="233" fill="#4e79a7"/><rect x="894" y="855" width="2" height="73" fill="#4e79a7"/><rect x="897" y="900" width="2" height="28" fill="#4e79a7"/><rect x="900" y="874" width="1" height="54" fill="#4e79a7"/><rect x="902" y="825" width="2" height="103" fill="#4e79a7"/><rect x="905" y="775" width="2" height="153" fill="#4e79a7"/><rect x="908" y="753" width="2" height="175" fill="#4e79a7"/><rect x="911" y="781" width="2" height="147" fill="#4e79a7"/><rect x="914" y="749" width="2" height="179" fill="#4e79a7"/><rect x="916" y="748" width="2" height="180" fill="#4e79a7"/><rect x="919" y="693" width="2" height="235" fill="#4e79a7"/><rect x="922" y="716" width="2" height="212" fill="#4e79a7"/><rect x="925" y="688" width="2" height="240" fill="#4e79a7"/><rect x="928" y="666" width="2" height="262" fill="#4e79a7"/><rect x="930" y="544" width="2" height="384" fill="#4e79a7"/><rect x="933" y="462" width="2" height="466" fill="#4e79a7"/><rect x="936" y="625" width="2" height="303" fill="#4e79a7"/><rect x="939" y="763" width="2" height="165" fill="#4e79a7"/><rect x="942" y="852" width="2" height="76" fill="#4e79a7"/><rect x="945" y="900" width="2" height="28" fill="#4e79a7"/><rect x="948" y="866" width="1" height="62" fill="#4e79a7"/><rect x="950" y="843" width="2" height="85" fill="#4e79a7"/><rect x="953" y="781" width="2" height="147" fill="#4e79a7"/><rect x="956" y="772" width="2" height="156" fill="#4e79a7"/><rect x="959" y="760" width="2" height="168" fill="#4e79a7"/><rect x="962" y="717" width="2" height="211" fill="#4e79a7"/><rect x="964" y="720" width="2" height="208" fill="#4e79a7"/><rect x="967" y="705" width="2" height="223" fill="#4e79a7"/><rect x="970" y="701" width="2" height="227" fill="#4e79a7"/><rect x="973" y="694" width="2" height="234" fill="#4e79a7"/><rect x="976" y="695" width="2" height="233" fill="#4e79a7"/><rect x="978" y="603" width="2" height="325" fill="#4e79a7"/><rect x="981" y="584" width="2" height="344" fill="#4e79a7"/><rect x="984" y="681" width="2" height="247" fill="#4e79a7"/><rect x="987" y="794" width="2" height="134" fill="#4e79a7"/><rect x="990" y="856" width="2" height="72" fill="#4e79a7"/><rect x="993" y="888" width="2" height="40" fill="#4e79a7"/><rect x="996" y="853" width="1" height="75" fill="#4e79a7"/><rect x="998" y="759" width="2" height="169" fill="#4e79a7"/><rect x="1001" y="693" width="2" height="235" fill="#4e79a7"/><rect x="1004" y="618" width="2" height="310" fill="#4e79a7"/><rect x="1007" y="618" width="2" height="310" fill="#4e79a7"/><rect x="1010" y="607" width="2" height="321" fill="#4e79a7"/><rect x="1012" y="548" width="2" height="380" fill="#4e79a7"/><rect x="1015" y="568" width="2" height="360" fill="#4e79a7"/><rect x="1018" y="548" width="2" height="380" fill="#4e79a7"/><rect x="1021" y="570" width="2" height="358" fill="#4e79a7"/><rect x="1024" y="623" width="2" height="305" fill="#4e79a7"/><rect x="1026" y="582" width="2" height="346" fill="#4e79a7"/><rect x="1029" y="600" width="2" height="328" fill="#4e79a7"/><rect x="1032" y="681" width="2" height="247" fill="#4e79a7"/><rect x="1035" y="799" width="2" height="129" fill="#4e79a7"/><rect x="1038" y="861" width="2" height="67" fill="#4e79a7"/><rect x="1041" y="899" width="2" height="29" fill="#4e79a7"/><rect x="701" y="928" width="343" height="1" fill="#e8e8e8"/><rect x="706" y="237" width="1" height="712" fill="#d2d2d2"/><rect x="754" y="237" width="1" height="712" fill="#d2d2d2"/><rect x="802" y="237" width="1" height="712" fill="#d2d2d2"/><rect x="850" y="237" width="1" height="712" fill="#d2d2d2"/><rect x="899" y="237" width="1" height="712" fill="#d2d2d2"/><rect x="947" y="237" width="1" height="712" fill="#d2d2d2"/><rect x="995" y="237" width="1" height="712" fill="#d2d2d2"/><rect x="1043" y="237" width="1" height="712" fill="#d2d2d2"/><rect x="706" y="257" width="338" height="1" fill="#d2d2d2"/></svg>
<div class=t style="left:709.93px;top:242.07px;font-size:12.2px;color:#666;">Sunday</div>
<div class=t style="left:756.67px;top:242.07px;font-size:12.2px;color:#666;">Monday</div>
<div class=t style="left:806.15px;top:242.07px;font-size:12.2px;color:#666;">Tuesd..</div>
<div class=t style="left:852.36px;top:242.07px;font-size:12.2px;color:#666;">Wedne..</div>
<div class=t style="left:901.14px;top:242.07px;font-size:12.2px;color:#666;">Thursd..</div>
<div class=t style="left:954.51px;top:242.07px;font-size:12.2px;color:#666;">Friday</div>
<div class=t style="left:998.01px;top:242.07px;font-size:12.2px;color:#666;">Saturd..</div>
<div class=t style="left:692.09px;top:914.10px;font-size:12.4px;color:#666;">0</div>
<div class=t style="left:678.31px;top:873.50px;font-size:12.4px;color:#666;">200</div>
<div class=t style="left:678.31px;top:824.10px;font-size:12.4px;color:#666;">400</div>
<div class=t style="left:678.31px;top:774.70px;font-size:12.4px;color:#666;">600</div>
<div class=t style="left:678.31px;top:725.30px;font-size:12.4px;color:#666;">800</div>
<div class=t style="left:671.42px;top:675.90px;font-size:12.4px;color:#666;">1000</div>
<div class=t style="left:671.42px;top:626.50px;font-size:12.4px;color:#666;">1200</div>
<div class=t style="left:671.42px;top:577.10px;font-size:12.4px;color:#666;">1400</div>
<div class=t style="left:671.42px;top:527.70px;font-size:12.4px;color:#666;">1600</div>
<div class=t style="left:671.42px;top:478.30px;font-size:12.4px;color:#666;">1800</div>
<div class=t style="left:671.42px;top:428.90px;font-size:12.4px;color:#666;">2000</div>
<div class=t style="left:671.42px;top:379.50px;font-size:12.4px;color:#666;">2200</div>
<div class=t style="left:671.42px;top:330.10px;font-size:12.4px;color:#666;">2400</div>
<div class=t style="left:671.42px;top:280.70px;font-size:12.4px;color:#666;">2600</div>
<div class=t style="left:712.67px;top:934.67px;font-size:12.2px;color:#666;">11</div>
<div class=t style="left:734.22px;top:934.67px;font-size:12.2px;color:#666;">19</div>
<div class=t style="left:760.47px;top:934.67px;font-size:12.2px;color:#666;">11</div>
<div class=t style="left:782.42px;top:934.67px;font-size:12.2px;color:#666;">19</div>
<div class=t style="left:808.57px;top:934.67px;font-size:12.2px;color:#666;">11</div>
<div class=t style="left:830.02px;top:934.67px;font-size:12.2px;color:#666;">19</div>
<div class=t style="left:853.32px;top:934.67px;font-size:12.2px;color:#666;">10</div>
<div class=t style="left:873.12px;top:934.67px;font-size:12.2px;color:#666;">17</div>
<div class=t style="left:905.77px;top:934.67px;font-size:12.2px;color:#666;">11</div>
<div class=t style="left:927.22px;top:934.67px;font-size:12.2px;color:#666;">19</div>
<div class=t style="left:953.37px;top:934.67px;font-size:12.2px;color:#666;">11</div>
<div class=t style="left:974.92px;top:934.67px;font-size:12.2px;color:#666;">19</div>
<div class=t style="left:1001.67px;top:934.67px;font-size:12.2px;color:#666;">11</div>
<div class=t style="left:1023.22px;top:934.67px;font-size:12.2px;color:#666;">19</div>
<div class=t style="left:592.90px;top:585.64px;font-size:12px;color:#333;-webkit-text-stroke:0.3px #333;letter-spacing:0.377px;transform:rotate(-90deg);transform-origin:50% 50%;">Count of master_table</div>
<div class=t style="left:1052.10px;top:176.90px;font-size:11.7px;color:#333;-webkit-text-stroke:0.3px #333;letter-spacing:0.406px;">Subcategory name</div>
<div class=r style="left:1055px;top:195.2px;width:14px;height:13.6px;background:#4e79a7;"></div>
<div class=t style="left:1074.50px;top:196.72px;font-size:12.5px;color:#555;">Communication</div>
<div class=r style="left:1055px;top:215.2px;width:14px;height:13.6px;background:#a0cbe8;"></div>
<div class=t style="left:1074.50px;top:216.72px;font-size:12.5px;color:#555;letter-spacing:-0.240px;">Cunning</div>
<div class=r style="left:1055px;top:235.2px;width:14px;height:13.6px;background:#f28e2b;"></div>
<div class=t style="left:1074.50px;top:236.72px;font-size:12.5px;color:#555;letter-spacing:0.022px;">Empathy</div>
<div class=r style="left:1055px;top:255.2px;width:14px;height:13.6px;background:#59a14f;"></div>
<div class=t style="left:1074.50px;top:256.72px;font-size:12.5px;color:#555;letter-spacing:0.040px;">Impossible Task</div>
<div class=r style="left:1055px;top:275.2px;width:14px;height:13.6px;background:#b6992d;"></div>
<div class=t style="left:1074.50px;top:276.72px;font-size:12.5px;color:#555;letter-spacing:0.107px;">Memory</div>
<div class=r style="left:1055px;top:295.2px;width:14px;height:13.6px;background:#86bcb6;"></div>
<div class=t style="left:1074.50px;top:296.72px;font-size:12.5px;color:#555;letter-spacing:-0.207px;">Reasoning</div>
<div class=r style="left:1055px;top:315.2px;width:14px;height:13.6px;background:#79706e;"></div>
<div class=t style="left:1074.50px;top:316.72px;font-size:12.5px;color:#555;letter-spacing:-0.371px;">Shell Game</div>
<div class=r style="left:1055px;top:335.2px;width:14px;height:13.6px;background:#fabfd2;"></div>
<div class=t style="left:1074.50px;top:336.72px;font-size:12.5px;color:#555;letter-spacing:0.180px;">Spatial Navigation</div>
</body></html>
